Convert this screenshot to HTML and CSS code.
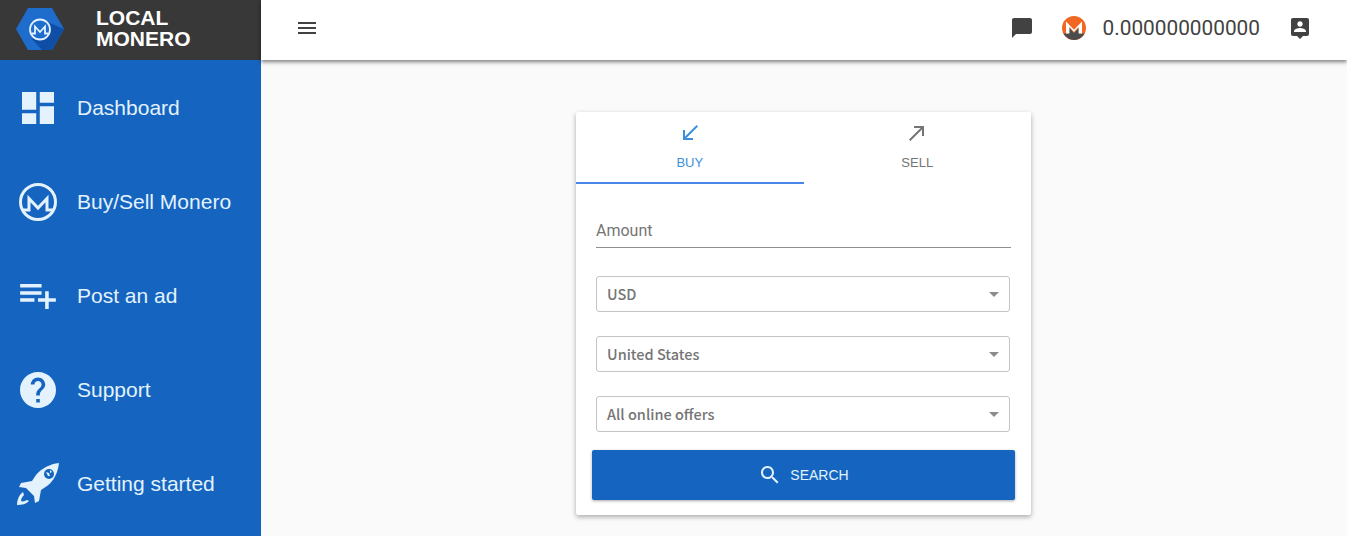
FILE: index.html
```html
<!DOCTYPE html>
<html lang="en">
<head>
<meta charset="utf-8">
<title>Local Monero</title>
<link rel="stylesheet" href="styles.css">
</head>
<body>
<div class="app">
  <aside class="sidebar">
    <div class="brand">
      <svg class="brand-logo" viewBox="0 0 48 42" width="48" height="42">
        <polygon points="0,21 12,0 36,0 48,21 36,42 12,42" fill="#1e6ccb"/>
        <polygon points="31,14 48,21 36,42 26,42 16,31" fill="#0f4ea6"/>
        <circle cx="24" cy="21.500" r="10" fill="#1e6ccb" stroke="#e3f2fd" stroke-width="1.800"/>
        <polyline points="15.500,25.500 19,25.500 19,18.500 24,24 29,18.500 29,25.500 32.500,25.500" fill="none" stroke="#e3f2fd" stroke-width="1.800"/>
      </svg>
      <div class="brand-name">LOCAL<br>MONERO</div>
    </div>
    <nav class="nav">
      <a class="nav-item">
        <span class="nav-icon"><svg viewBox="3 3 18 18" width="32" height="32"><path fill="#e3f2fd" d="M3 13h8V3H3v10zm0 8h8v-6H3v6zm10 0h8V11h-8v10zm0-18v6h8V3h-8z"/></svg></span>
        <span>Dashboard</span>
      </a>
      <a class="nav-item">
        <span class="nav-icon"><svg viewBox="0 0 38 38" width="38" height="38"><circle cx="19" cy="19" r="17.500" fill="none" stroke="#e3f2fd" stroke-width="3"/><polyline points="4,27 10,27 10,15.500 19,25 28,15.500 28,27 34,27" fill="none" stroke="#e3f2fd" stroke-width="3"/></svg></span>
        <span>Buy/Sell Monero</span>
      </a>
      <a class="nav-item">
        <span class="nav-icon"><svg viewBox="2 6 20 14" width="36" height="25"><path fill="#e3f2fd" d="M14 10H2v2h12v-2zm0-4H2v2h12V6zm4 8v-4h-2v4h-4v2h4v4h2v-4h4v-2h-4zM2 16h8v-2H2v2z"/></svg></span>
        <span>Post an ad</span>
      </a>
      <a class="nav-item">
        <span class="nav-icon"><svg viewBox="2 2 20 20" width="36" height="36"><path fill="#e3f2fd" d="M12 2C6.480 2 2 6.480 2 12s4.480 10 10 10 10-4.480 10-10S17.520 2 12 2zm1 17h-2v-2h2v2zm2.070-7.750l-.9.920C13.450 12.900 13 13.500 13 15h-2v-.5c0-1.100.45-2.100 1.170-2.830l1.240-1.260c.37-.36.59-.86.59-1.410 0-1.100-.9-2-2-2s-2 .9-2 2H8c0-2.210 1.790-4 4-4s4 1.790 4 4c0 .88-.36 1.680-.93 2.250z"/></svg></span>
        <span>Support</span>
      </a>
      <a class="nav-item">
        <span class="nav-icon"><svg viewBox="0 0 42 42" width="42" height="42">
          <path fill="#e3f2fd" d="M42 0C33 1 25 5 19 12L15 18 4 20l-2 4 7 1 8 8 1 7 4-2 2-11 6-4C37 18 41 9 42 0z"/>
          <circle cx="32" cy="11" r="5" fill="#1565c0"/>
          <path fill="#e3f2fd" d="M29 9l3 1 1 3-2 0zM33 7l2 2-2 1z"/>
          <path fill="#e3f2fd" d="M6 29C2 32 0 37 0 42c5 0 9-1 12-4l-2-1c-2 1-4 2-6 1 0-2 1-4 3-6z"/>
        </svg></span>
        <span>Getting started</span>
      </a>
    </nav>
  </aside>
  <div class="content">
    <header class="topbar">
      <svg class="menu-icon" viewBox="0 0 24 24" width="24" height="24"><path fill="#424242" d="M3 18h18v-2H3v2zm0-5h18v-2H3v2zm0-7v2h18V6H3z"/></svg>
      <div class="top-right">
        <svg class="chat-icon" viewBox="2 2 20 20" width="20" height="20"><path fill="#424242" d="M20 2H4c-1.100 0-2 .9-2 2v18l4-4h14c1.100 0 2-.9 2-2V4c0-1.100-.9-2-2-2z"/></svg>
        <svg class="xmr-icon" viewBox="0 0 24 24" width="24" height="24">
          <circle cx="12" cy="12" r="12" fill="#f26822"/>
          <path fill="#4c4c4c" d="M1.400 17.500h5V11l5.600 6 5.600-6v6.500h5A12 12 0 0 1 1.400 17.500z"/>
          <path fill="#fff" d="M4 17.500V5.500l8 8.200 8-8.200v12h-3.400V11l-4.600 4.900L7.400 11v6.500z"/>
        </svg>
        <span class="balance">0.000000000000</span>
        <svg class="person-icon" viewBox="3 2 18 21" width="18" height="21"><path fill="#424242" d="M19 2H5c-1.110 0-2 .9-2 2v14c0 1.100.89 2 2 2h4l3 3 3-3h4c1.100 0 2-.9 2-2V4c0-1.100-.9-2-2-2zm-7 3.300c1.490 0 2.700 1.210 2.700 2.700 0 1.490-1.210 2.700-2.700 2.700-1.490 0-2.700-1.210-2.700-2.700 0-1.490 1.210-2.700 2.700-2.700zM18 16H6v-.9c0-2 4-3.100 6-3.100s6 1.100 6 3.100v.9z"/></svg>
      </div>
    </header>
    <main class="main">
      <section class="card">
        <div class="tabs">
          <div class="tab tab-active">
            <svg viewBox="0 0 24 24" width="24" height="24"><path fill="#3d8fdd" d="M20 5.410L18.590 4 7 15.590V9H5v10h10v-2H8.410z"/></svg>
            <span>BUY</span>
          </div>
          <div class="tab">
            <svg viewBox="0 0 24 24" width="24" height="24"><path fill="#757575" d="M9 5v2h6.590L4 18.590 5.410 20 17 8.410V15h2V5z"/></svg>
            <span>SELL</span>
          </div>
        </div>
        <div class="form">
          <div class="amount">Amount</div>
          <div class="select"><span>USD</span><i class="caret"></i></div>
          <div class="select"><span>United States</span><i class="caret"></i></div>
          <div class="select"><span>All online offers</span><i class="caret"></i></div>
        </div>
        <button class="search" type="button">
          <svg viewBox="0 0 24 24" width="24" height="24"><path fill="#e3f2fd" d="M15.500 14h-.79l-.28-.27C15.410 12.590 16 11.110 16 9.500 16 5.910 13.090 3 9.500 3S3 5.910 3 9.500 5.910 16 9.500 16c1.610 0 3.090-.59 4.230-1.570l.27.28v.79l5 4.990L20.490 19l-4.990-5zm-6 0C7.010 14 5 11.990 5 9.500S7.010 5 9.500 5 14 7.010 14 9.500 11.990 14 9.500 14z"/></svg>
          <span>SEARCH</span>
        </button>
      </section>
    </main>
  </div>
</div>
</body>
</html>
```

FILE: styles.css
```css
* { box-sizing: border-box; }
html, body { margin: 0; height: 100%; overflow: hidden; }
body { font-family: "Liberation Sans", Arial, sans-serif; background: #fafafa; }

.app { display: grid; grid-template-columns: 261px 1fr; height: 536px; }

.sidebar { background: #1565c0; color: #e3f2fd; display: flex; flex-direction: column; }
.brand { height: 60px; background: #383838; display: flex; align-items: center; padding-left: 16px; }
.brand-logo { margin-top: -3px; flex: none; }
.brand-name { margin-left: 32px; margin-top: -5px; color: #fff; font-weight: 700; font-size: 21px; line-height: 21px; }

.nav { display: flex; flex-direction: column; padding-top: 1px; }
.nav-item { height: 94px; display: flex; align-items: center; font-size: 21px; }
.nav-icon { width: 77px; flex: none; display: flex; justify-content: center; padding-right: 1px; }
.nav-icon svg { display: block; }

.content { display: flex; flex-direction: column; min-width: 0; }
.topbar {
  height: 60px; background: #fff; display: flex; align-items: center;
  padding: 0 38px 0 34px; justify-content: space-between;
  box-shadow: 0 2px 4px rgba(0,0,0,.5); position: relative;
}
.menu-icon { display: block; margin-top: -4px; }
.top-right { display: flex; align-items: center; margin-top: -4px; }
.chat-icon { display: block; }
.xmr-icon { display: block; margin-left: 30px; }
.balance { margin-left: 17px; font-family: Roboto, sans-serif; font-size: 20.8px; color: #424242; }
.person-icon { display: block; margin-left: 31px; margin-top: 1px; }

.main { flex: 1; display: flex; justify-content: center; padding-top: 52px; padding-right: 1px; }
.card {
  width: 455px; height: 403px; background: #fff; border-radius: 2px;
  box-shadow: 0 2px 5px rgba(0,0,0,.32);
}
.tabs { display: flex; height: 72px; }
.tab {
  flex: 1; display: flex; flex-direction: column; align-items: center;
  padding-top: 9px; font-size: 13px; color: #757575;
}
.tab svg { display: block; }
.tab span { margin-top: 10px; line-height: 16px; }
.tab-active { color: #3d8fdd; border-bottom: 2px solid #4a86e8; }

.form { padding: 0 20px; }
.amount {
  margin-top: 37px; height: 27px; border-bottom: 1px solid #8f8f8f;
  font-family: Roboto, sans-serif; font-size: 16px; line-height: 20px; color: #757575;
}
.select {
  margin-top: 24px; width: 414px; height: 36px; display: flex; align-items: center;
  justify-content: space-between; padding: 0 10px 0 10px;
  border: 1px solid #c4c4c4; border-radius: 3px;
  font-family: "Noto Sans CJK SC", "Noto Sans", sans-serif; font-weight: 500; font-size: 14.5px; line-height: 20px; color: #757575;
}
.amount + .select { margin-top: 28px; }
.caret { width: 0; height: 0; border: 5px solid transparent; border-top: 5px solid #8c8c8c; border-bottom: 0; }

.search {
  display: flex; align-items: center; justify-content: center; gap: 8px;
  width: 423px; height: 50px; margin: 18px 0 0 16px; padding: 0;
  background: #1565c0; border: 0; border-radius: 2px; color: #e3f2fd;
  font-family: "Liberation Sans", Arial, sans-serif; font-size: 14px;
  box-shadow: 0 1px 3px rgba(0,0,0,.35);
}
.search svg { display: block; }
```
